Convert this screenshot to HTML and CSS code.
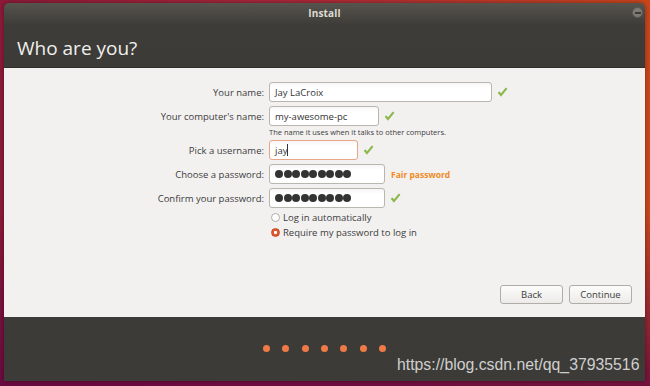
FILE: index.html
```html
<!DOCTYPE html>
<html lang="en">
<head>
    <meta charset="UTF-8">
    <title>Install</title>
    <link rel="stylesheet" href="styles.css">
</head>
<body>
    <div class="window">
        <div class="header">
            <div class="title-bar">
                <span class="title">Install</span>
                <span class="minimize"><span></span></span>
            </div>
            <h1>Who are you?</h1>
        </div>

        <div class="content">
            <form class="user-form">
                <div class="row">
                    <label>Your name:</label>
                    <div class="field name">Jay LaCroix</div>
                    <svg class="check" viewBox="0 0 12 12"><path d="M1.2 6.4 L4.3 10.2 L11 2 L9.6 1 L4.4 7.4 L2.6 5.2 Z"/></svg>
                </div>
                <div class="row">
                    <label>Your computer's name:</label>
                    <div class="field computer">my-awesome-pc</div>
                    <svg class="check" viewBox="0 0 12 12"><path d="M1.2 6.4 L4.3 10.2 L11 2 L9.6 1 L4.4 7.4 L2.6 5.2 Z"/></svg>
                </div>
                <div class="hint">The name it uses when it talks to other computers.</div>
                <div class="row">
                    <label>Pick a username:</label>
                    <div class="field username focused">jay<span class="caret"></span></div>
                    <svg class="check" viewBox="0 0 12 12"><path d="M1.2 6.4 L4.3 10.2 L11 2 L9.6 1 L4.4 7.4 L2.6 5.2 Z"/></svg>
                </div>
                <div class="row">
                    <label>Choose a password:</label>
                    <div class="field password">
                        <span class="dot"></span><span class="dot"></span><span class="dot"></span>
                        <span class="dot"></span><span class="dot"></span><span class="dot"></span>
                        <span class="dot"></span><span class="dot"></span><span class="dot"></span>
                    </div>
                    <span class="strength">Fair password</span>
                </div>
                <div class="row tight">
                    <label>Confirm your password:</label>
                    <div class="field password">
                        <span class="dot"></span><span class="dot"></span><span class="dot"></span>
                        <span class="dot"></span><span class="dot"></span><span class="dot"></span>
                        <span class="dot"></span><span class="dot"></span><span class="dot"></span>
                    </div>
                    <svg class="check" viewBox="0 0 12 12"><path d="M1.2 6.4 L4.3 10.2 L11 2 L9.6 1 L4.4 7.4 L2.6 5.2 Z"/></svg>
                </div>
                <div class="options">
                    <div class="option"><span class="radio"></span>Log in automatically</div>
                    <div class="option"><span class="radio selected"></span>Require my password to log in</div>
                </div>
            </form>

            <div class="buttons">
                <button type="button">Back</button>
                <button type="button">Continue</button>
            </div>
        </div>

        <div class="footer">
            <div class="progress">
                <span></span><span></span><span></span><span></span><span></span><span></span><span></span>
            </div>
        </div>
    </div>

    <div class="watermark">https://blog.csdn.net/qq_37935516</div>
</body>
</html>
```

FILE: styles.css
```css
body {
    margin: 0;
    width: 650px;
    height: 386px;
    overflow: hidden;
    font-family: 'Open Sans', sans-serif;
    background:
        linear-gradient(to bottom, rgba(100, 8, 66, 0) 55%, rgba(100, 8, 66, 0.85) 100%),
        linear-gradient(to right, #8c1a38, #a8283a 45%, #c8461c);
    position: relative;
}

.window {
    position: absolute;
    left: 4px;
    top: 3px;
    width: 641px;
    height: 378px;
    display: flex;
    flex-direction: column;
    border-radius: 5px 5px 0 0;
    overflow: hidden;
    box-shadow: 0 0 4px rgba(0, 0, 0, 0.4);
}

.header {
    height: 65px;
    background: linear-gradient(to bottom, #57544e, #3d3c38 22px, #3c3b37);
    color: #f2f1ef;
    border-bottom: 1px solid #2f2e2b;
    box-sizing: border-box;
}

.title-bar {
    height: 20px;
    display: flex;
    align-items: center;
    justify-content: center;
    position: relative;
}

.title {
    font-size: 10px;
    font-weight: 700;
    color: #dfdbd2;
    letter-spacing: 0.2px;
}

.minimize {
    position: absolute;
    right: 2px;
    top: 4px;
    width: 11px;
    height: 11px;
    border-radius: 50%;
    background: #7c7a75;
    border: 1px solid #5a5853;
    box-sizing: border-box;
    display: flex;
    align-items: center;
    justify-content: center;
}

.minimize span {
    width: 6px;
    height: 2px;
    background: #3c3b37;
}

h1 {
    margin: 13px 0 0 13px;
    font-size: 19px;
    font-weight: 400;
    color: #f0efec;
    line-height: 24px;
}

.content {
    flex: 1;
    background: #f2f1f0;
    display: flex;
    flex-direction: column;
    padding: 14px 13px 13px 0;
}

.user-form {
    display: flex;
    flex-direction: column;
}

.row {
    display: flex;
    align-items: center;
    height: 20px;
    margin-bottom: 4px;
}

.row.tight {
    margin-bottom: 0;
}

.row label {
    width: 260px;
    text-align: right;
    font-size: 9.5px;
    color: #3c3c3c;
    margin-right: 5px;
}

.field {
    height: 20px;
    box-sizing: border-box;
    border: 1px solid #b9b6b0;
    border-radius: 3px;
    background: linear-gradient(to bottom, #f6f6f6, #ffffff 5px);
    font-size: 9.5px;
    color: #333;
    padding-left: 5px;
    display: flex;
    align-items: center;
}

.field.name { width: 223px; }
.field.computer { width: 110px; }
.field.username { width: 89px; }
.field.password { width: 116px; }

.field.focused {
    border-color: #e9a58a;
}

.caret {
    width: 1px;
    height: 12px;
    background: #333;
}

.check {
    width: 11px;
    height: 11px;
    margin-left: 5px;
    fill: #8cbd3f;
    stroke: #6f9e2c;
    stroke-width: 0.5;
}

.hint {
    font-size: 7.5px;
    color: #3c3c3c;
    margin: -3px 0 2px 265px;
    line-height: 11px;
}

.dot {
    width: 8px;
    height: 8px;
    border-radius: 50%;
    background: #333333;
    margin-right: 0.5px;
}

.strength {
    margin-left: 6px;
    font-size: 8.5px;
    font-weight: 700;
    color: #f08a1c;
}

.options {
    margin: 2px 0 0 267px;
    display: flex;
    flex-direction: column;
}

.option {
    display: flex;
    align-items: center;
    height: 15px;
    font-size: 9.5px;
    color: #3c3c3c;
}

.radio {
    width: 9px;
    height: 9px;
    border-radius: 50%;
    box-sizing: border-box;
    border: 1px solid #b1aea8;
    background: #fff;
    margin-right: 3px;
}

.radio.selected {
    border-color: #c44a24;
    background: radial-gradient(circle, #ffffff 1.3px, #e2592e 1.9px);
}

.buttons {
    margin-top: auto;
    display: flex;
    justify-content: flex-end;
    gap: 6px;
}

.buttons button {
    width: 63px;
    height: 19px;
    border: 1px solid #b0ada6;
    border-radius: 3px;
    background: linear-gradient(to bottom, #fcfcfb, #ecebe9);
    font-family: 'Open Sans', sans-serif;
    font-size: 9.5px;
    color: #3c3c3c;
    padding: 0;
}

.footer {
    height: 64px;
    background: #3c3b37;
    display: flex;
    justify-content: center;
    padding-top: 28px;
    box-sizing: border-box;
}

.progress {
    display: flex;
    gap: 12.3px;
    height: 7px;
}

.progress span {
    width: 7px;
    height: 7px;
    border-radius: 50%;
    background: #f07a47;
}

.watermark {
    position: absolute;
    left: 397px;
    top: 356px;
    font-family: 'Liberation Sans', sans-serif;
    font-size: 15.8px;
    color: #cfcfcf;
}
```
